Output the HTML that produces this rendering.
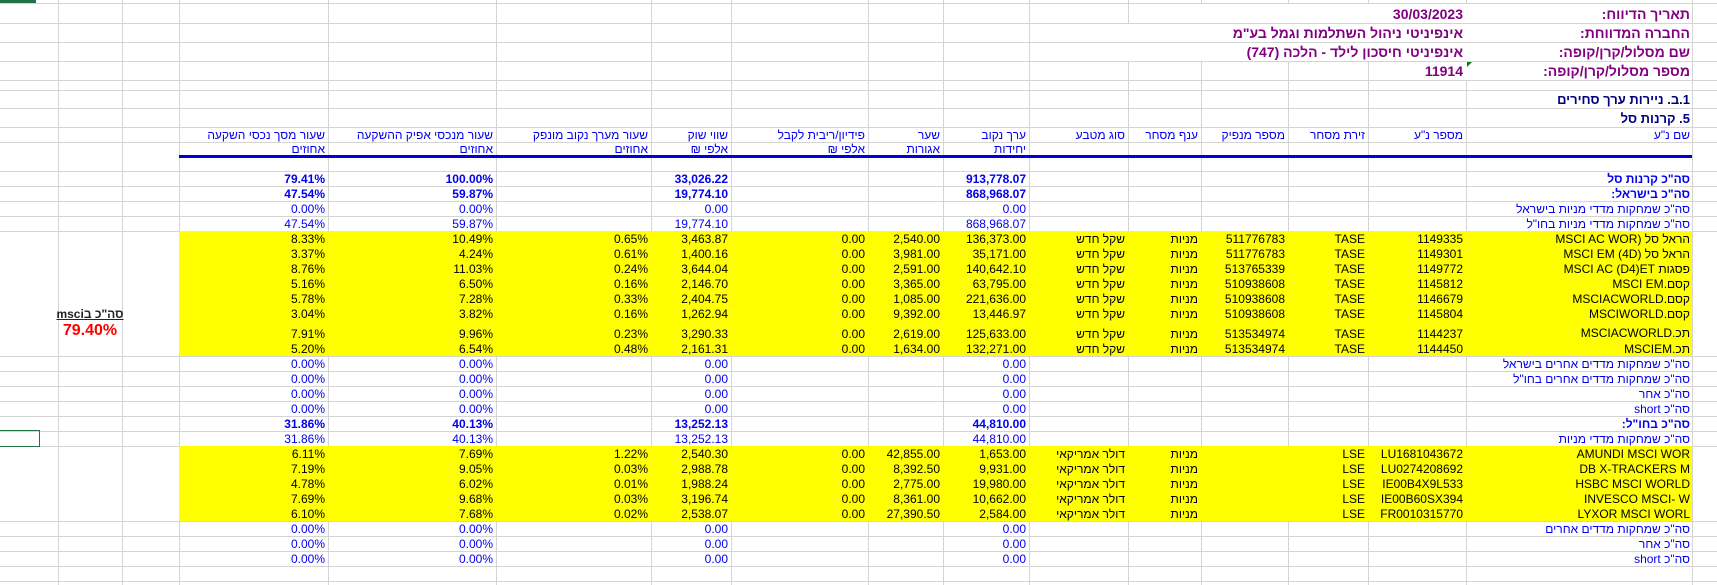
<!DOCTYPE html>
<html><head><meta charset="utf-8"><style>
*{margin:0;padding:0;box-sizing:border-box}
body{width:1717px;height:585px;overflow:hidden;background:#fff;position:relative;font-family:"Liberation Sans",Arial,sans-serif;font-size:12px;color:#000}
.v{position:absolute;top:0;width:1px;height:585px;background:#d4d4d4}
.h{position:absolute;left:0;width:1717px;height:1px;background:#d4d4d4}
.r{position:absolute;left:0;width:1717px}
.r span{position:absolute;top:0;white-space:nowrap;text-align:right;padding-right:3px;height:100%;display:flex;align-items:center;justify-content:flex-end;unicode-bidi:plaintext}
.y{position:absolute;left:179px;width:1513px;height:100%;background:#ffff00}
.c3{left:179px;width:149px}.c4{left:328px;width:168px}.c5{left:496px;width:155px}.c6{left:651px;width:80px}.c7{left:731px;width:137px}.c8{left:868px;width:75px}.c9{left:943px;width:86px}.c10{left:1029px;width:99px}.c11{left:1128px;width:73px}.c12{left:1201px;width:87px}.c13{left:1288px;width:80px}.c14{left:1368px;width:98px}.c15{left:1466px;width:226px;direction:rtl;justify-content:flex-start!important;padding-right:2px!important;text-align:right}
.b{color:#0000ee}.bb{color:#0000ee;font-weight:bold}
.nm{font-family:"Liberation Sans Narrow","Liberation Sans",sans-serif;font-stretch:condensed}
.top span{font-weight:bold;font-size:14px;color:#800080}
</style></head><body>
<div class="v" style="left:58px"></div><div class="v" style="left:122px"></div><div class="v" style="left:179px"></div><div class="v" style="left:328px"></div><div class="v" style="left:496px"></div><div class="v" style="left:651px"></div><div class="v" style="left:731px"></div><div class="v" style="left:868px"></div><div class="v" style="left:943px"></div><div class="v" style="left:1029px"></div><div class="v" style="left:1128px"></div><div class="v" style="left:1201px"></div><div class="v" style="left:1288px"></div><div class="v" style="left:1368px"></div><div class="v" style="left:1466px"></div><div class="v" style="left:1692px"></div>
<div class="h" style="top:3px"></div><div class="h" style="top:23px"></div><div class="h" style="top:42px"></div><div class="h" style="top:61px"></div><div class="h" style="top:80px"></div><div class="h" style="top:90px"></div><div class="h" style="top:108px"></div><div class="h" style="top:127px"></div><div class="h" style="top:142px"></div><div class="h" style="top:171px"></div>
<div class="h" style="top:186px"></div><div class="h" style="top:201px"></div><div class="h" style="top:216px"></div><div class="h" style="top:231px"></div><div class="h" style="top:371px"></div><div class="h" style="top:386px"></div><div class="h" style="top:401px"></div><div class="h" style="top:416px"></div><div class="h" style="top:431px"></div><div class="h" style="top:446px"></div><div class="h" style="top:536px"></div><div class="h" style="top:551px"></div><div class="h" style="top:566px"></div><div class="h" style="top:356px"></div><div class="h" style="top:521px"></div><div class="h" style="top:581px"></div>
<div style="position:absolute;left:0;top:0;width:36px;height:3px;background:#217346"></div>

<div class="r top" style="top:4px;height:19px"><span style="left:1130px;width:336px;background:#fff">30/03/2023</span><span class="c15" style="background:#fff;color:#800080">תאריך הדיווח:</span></div>
<div class="r top" style="top:24px;height:18px"><span style="left:1030px;width:436px;background:#fff">אינפיניטי ניהול השתלמות וגמל בע"מ</span><span class="c15" style="background:#fff">החברה המדווחת:</span></div>
<div class="r top" style="top:43px;height:18px"><span style="left:1030px;width:436px;background:#fff">אינפיניטי חיסכון לילד - הלכה (747)</span><span class="c15" style="background:#fff">שם מסלול/קרן/קופה:</span></div>
<div class="r top" style="top:62px;height:18px"><span style="left:1370px;width:96px;background:#fff">11914</span><span class="c15" style="background:#fff">מספר מסלול/קרן/קופה:</span></div>
<div style="position:absolute;left:1467px;top:62px;width:0;height:0;border-top:5px solid #008000;border-right:5px solid transparent"></div>
<div class="r" style="top:91px;height:17px"><span class="c15" style="font-weight:bold;font-size:13px;color:#000080">1.ב. ניירות ערך סחירים</span></div>
<div class="r" style="top:109px;height:18px"><span class="c15" style="font-weight:bold;font-size:13px;color:#000080">5. קרנות סל</span></div>

<div class="r b" style="top:128px;height:14px"><span class="c15">שם נ"ע</span><span class="c14">מספר נ"ע</span><span class="c13">זירת מסחר</span><span class="c12">מספר מנפיק</span><span class="c11">ענף מסחר</span><span class="c10">סוג מטבע</span><span class="c9">ערך נקוב</span><span class="c8">שער</span><span class="c7">פידיון/ריבית לקבל</span><span class="c6">שווי שוק</span><span class="c5">שעור מערך נקוב מונפק</span><span class="c4">שעור מנכסי אפיק ההשקעה</span><span class="c3">שעור מסך נכסי השקעה</span></div>
<div class="r b" style="top:142px;height:13px"><span class="c9">יחידות</span><span class="c8">אגורות</span><span class="c7">אלפי ₪</span><span class="c6">אלפי ₪</span><span class="c5">אחוזים</span><span class="c4">אחוזים</span><span class="c3">אחוזים</span></div>
<div style="position:absolute;left:179px;top:155px;width:1513px;height:3px;background:#0000dd"></div>

<div class="r bb" style="top:172px;height:14px"><span class="c15">סה"כ קרנות סל</span><span class="c9">913,778.07</span><span class="c6">33,026.22</span><span class="c4">100.00%</span><span class="c3">79.41%</span></div>
<div class="r bb" style="top:187px;height:14px"><span class="c15">סה"כ בישראל:</span><span class="c9">868,968.07</span><span class="c6">19,774.10</span><span class="c4">59.87%</span><span class="c3">47.54%</span></div>
<div class="r b" style="top:202px;height:14px"><span class="c15">סה"כ שמחקות מדדי מניות בישראל</span><span class="c9">0.00</span><span class="c6">0.00</span><span class="c4">0.00%</span><span class="c3">0.00%</span></div>
<div class="r b" style="top:217px;height:14px"><span class="c15">סה"כ שמחקות מדדי מניות בחו"ל</span><span class="c9">868,968.07</span><span class="c6">19,774.10</span><span class="c4">59.87%</span><span class="c3">47.54%</span></div>

<div class="r" style="top:231px;height:15px"><div class="y"></div><span class="c15 nm">הראל סל (MSCI AC WOR</span><span class="c14">1149335</span><span class="c13">TASE</span><span class="c12">511776783</span><span class="c11">מניות</span><span class="c10">שקל חדש</span><span class="c9">136,373.00</span><span class="c8">2,540.00</span><span class="c7">0.00</span><span class="c6">3,463.87</span><span class="c5">0.65%</span><span class="c4">10.49%</span><span class="c3">8.33%</span></div>
<div class="r" style="top:246px;height:15px"><div class="y"></div><span class="c15 nm">הראל סל (MSCI EM (4D</span><span class="c14">1149301</span><span class="c13">TASE</span><span class="c12">511776783</span><span class="c11">מניות</span><span class="c10">שקל חדש</span><span class="c9">35,171.00</span><span class="c8">3,981.00</span><span class="c7">0.00</span><span class="c6">1,400.16</span><span class="c5">0.61%</span><span class="c4">4.24%</span><span class="c3">3.37%</span></div>
<div class="r" style="top:261px;height:15px"><div class="y"></div><span class="c15 nm">פסגות MSCI AC (D4)ET</span><span class="c14">1149772</span><span class="c13">TASE</span><span class="c12">513765339</span><span class="c11">מניות</span><span class="c10">שקל חדש</span><span class="c9">140,642.10</span><span class="c8">2,591.00</span><span class="c7">0.00</span><span class="c6">3,644.04</span><span class="c5">0.24%</span><span class="c4">11.03%</span><span class="c3">8.76%</span></div>
<div class="r" style="top:276px;height:15px"><div class="y"></div><span class="c15 nm">קסם.MSCI EM</span><span class="c14">1145812</span><span class="c13">TASE</span><span class="c12">510938608</span><span class="c11">מניות</span><span class="c10">שקל חדש</span><span class="c9">63,795.00</span><span class="c8">3,365.00</span><span class="c7">0.00</span><span class="c6">2,146.70</span><span class="c5">0.16%</span><span class="c4">6.50%</span><span class="c3">5.16%</span></div>
<div class="r" style="top:291px;height:15px"><div class="y"></div><span class="c15 nm">קסם.MSCIACWORLD</span><span class="c14">1146679</span><span class="c13">TASE</span><span class="c12">510938608</span><span class="c11">מניות</span><span class="c10">שקל חדש</span><span class="c9">221,636.00</span><span class="c8">1,085.00</span><span class="c7">0.00</span><span class="c6">2,404.75</span><span class="c5">0.33%</span><span class="c4">7.28%</span><span class="c3">5.78%</span></div>
<div class="r" style="top:306px;height:15px"><div class="y"></div><span class="c15 nm">קסם.MSCIWORLD</span><span class="c14">1145804</span><span class="c13">TASE</span><span class="c12">510938608</span><span class="c11">מניות</span><span class="c10">שקל חדש</span><span class="c9">13,446.97</span><span class="c8">9,392.00</span><span class="c7">0.00</span><span class="c6">1,262.94</span><span class="c5">0.16%</span><span class="c4">3.82%</span><span class="c3">3.04%</span><span style="left:58px;width:64px;justify-content:center;padding:0;font-weight:bold;text-decoration:underline;color:#222;direction:rtl">סה"כ בmsci</span></div>
<div class="r" style="top:321px;height:20px"><div class="y"></div><span class="c15 nm" style="align-items:flex-end;padding-bottom:1px">תכ.MSCIACWORLD</span><span class="c14" style="align-items:flex-end">1144237</span><span class="c13" style="align-items:flex-end">TASE</span><span class="c12" style="align-items:flex-end">513534974</span><span class="c11" style="align-items:flex-end">מניות</span><span class="c10" style="align-items:flex-end">שקל חדש</span><span class="c9" style="align-items:flex-end">125,633.00</span><span class="c8" style="align-items:flex-end">2,619.00</span><span class="c7" style="align-items:flex-end">0.00</span><span class="c6" style="align-items:flex-end">3,290.33</span><span class="c5" style="align-items:flex-end">0.23%</span><span class="c4" style="align-items:flex-end">9.96%</span><span class="c3" style="align-items:flex-end">7.91%</span><span style="left:58px;width:64px;justify-content:center;padding:0;font-weight:bold;font-size:16px;color:#ff0000">79.40%</span></div>
<div class="r" style="top:341px;height:15px"><div class="y"></div><span class="c15 nm">תכ.MSCIEM</span><span class="c14">1144450</span><span class="c13">TASE</span><span class="c12">513534974</span><span class="c11">מניות</span><span class="c10">שקל חדש</span><span class="c9">132,271.00</span><span class="c8">1,634.00</span><span class="c7">0.00</span><span class="c6">2,161.31</span><span class="c5">0.48%</span><span class="c4">6.54%</span><span class="c3">5.20%</span></div>

<div class="r b" style="top:357px;height:14px"><span class="c15">סה"כ שמחקות מדדים אחרים בישראל</span><span class="c9">0.00</span><span class="c6">0.00</span><span class="c4">0.00%</span><span class="c3">0.00%</span></div>
<div class="r b" style="top:372px;height:14px"><span class="c15">סה"כ שמחקות מדדים אחרים בחו"ל</span><span class="c9">0.00</span><span class="c6">0.00</span><span class="c4">0.00%</span><span class="c3">0.00%</span></div>
<div class="r b" style="top:387px;height:14px"><span class="c15">סה"כ אחר</span><span class="c9">0.00</span><span class="c6">0.00</span><span class="c4">0.00%</span><span class="c3">0.00%</span></div>
<div class="r b" style="top:402px;height:14px"><span class="c15">סה"כ short</span><span class="c9">0.00</span><span class="c6">0.00</span><span class="c4">0.00%</span><span class="c3">0.00%</span></div>
<div class="r bb" style="top:417px;height:14px"><span class="c15">סה"כ בחו"ל:</span><span class="c9">44,810.00</span><span class="c6">13,252.13</span><span class="c4">40.13%</span><span class="c3">31.86%</span></div>
<div class="r b" style="top:432px;height:14px"><span class="c15">סה"כ שמחקות מדדי מניות</span><span class="c9">44,810.00</span><span class="c6">13,252.13</span><span class="c4">40.13%</span><span class="c3">31.86%</span></div>
<div style="position:absolute;left:-1px;top:430px;width:41px;height:17px;border:1px solid #217346"></div>

<div class="r" style="top:446px;height:15px"><div class="y"></div><span class="c15 nm">AMUNDI MSCI WOR</span><span class="c14">LU1681043672</span><span class="c13">LSE</span><span class="c11">מניות</span><span class="c10">דולר אמריקאי</span><span class="c9">1,653.00</span><span class="c8">42,855.00</span><span class="c7">0.00</span><span class="c6">2,540.30</span><span class="c5">1.22%</span><span class="c4">7.69%</span><span class="c3">6.11%</span></div>
<div class="r" style="top:461px;height:15px"><div class="y"></div><span class="c15 nm">DB X-TRACKERS M</span><span class="c14">LU0274208692</span><span class="c13">LSE</span><span class="c11">מניות</span><span class="c10">דולר אמריקאי</span><span class="c9">9,931.00</span><span class="c8">8,392.50</span><span class="c7">0.00</span><span class="c6">2,988.78</span><span class="c5">0.03%</span><span class="c4">9.05%</span><span class="c3">7.19%</span></div>
<div class="r" style="top:476px;height:15px"><div class="y"></div><span class="c15 nm">HSBC MSCI WORLD</span><span class="c14">IE00B4X9L533</span><span class="c13">LSE</span><span class="c11">מניות</span><span class="c10">דולר אמריקאי</span><span class="c9">19,980.00</span><span class="c8">2,775.00</span><span class="c7">0.00</span><span class="c6">1,988.24</span><span class="c5">0.01%</span><span class="c4">6.02%</span><span class="c3">4.78%</span></div>
<div class="r" style="top:491px;height:15px"><div class="y"></div><span class="c15 nm">INVESCO MSCI- W</span><span class="c14">IE00B60SX394</span><span class="c13">LSE</span><span class="c11">מניות</span><span class="c10">דולר אמריקאי</span><span class="c9">10,662.00</span><span class="c8">8,361.00</span><span class="c7">0.00</span><span class="c6">3,196.74</span><span class="c5">0.03%</span><span class="c4">9.68%</span><span class="c3">7.69%</span></div>
<div class="r" style="top:506px;height:15px"><div class="y"></div><span class="c15 nm">LYXOR MSCI WORL</span><span class="c14">FR0010315770</span><span class="c13">LSE</span><span class="c11">מניות</span><span class="c10">דולר אמריקאי</span><span class="c9">2,584.00</span><span class="c8">27,390.50</span><span class="c7">0.00</span><span class="c6">2,538.07</span><span class="c5">0.02%</span><span class="c4">7.68%</span><span class="c3">6.10%</span></div>

<div class="r b" style="top:522px;height:14px"><span class="c15">סה"כ שמחקות מדדים אחרים</span><span class="c9">0.00</span><span class="c6">0.00</span><span class="c4">0.00%</span><span class="c3">0.00%</span></div>
<div class="r b" style="top:537px;height:14px"><span class="c15">סה"כ אחר</span><span class="c9">0.00</span><span class="c6">0.00</span><span class="c4">0.00%</span><span class="c3">0.00%</span></div>
<div class="r b" style="top:552px;height:14px"><span class="c15">סה"כ short</span><span class="c9">0.00</span><span class="c6">0.00</span><span class="c4">0.00%</span><span class="c3">0.00%</span></div>
</body></html>
